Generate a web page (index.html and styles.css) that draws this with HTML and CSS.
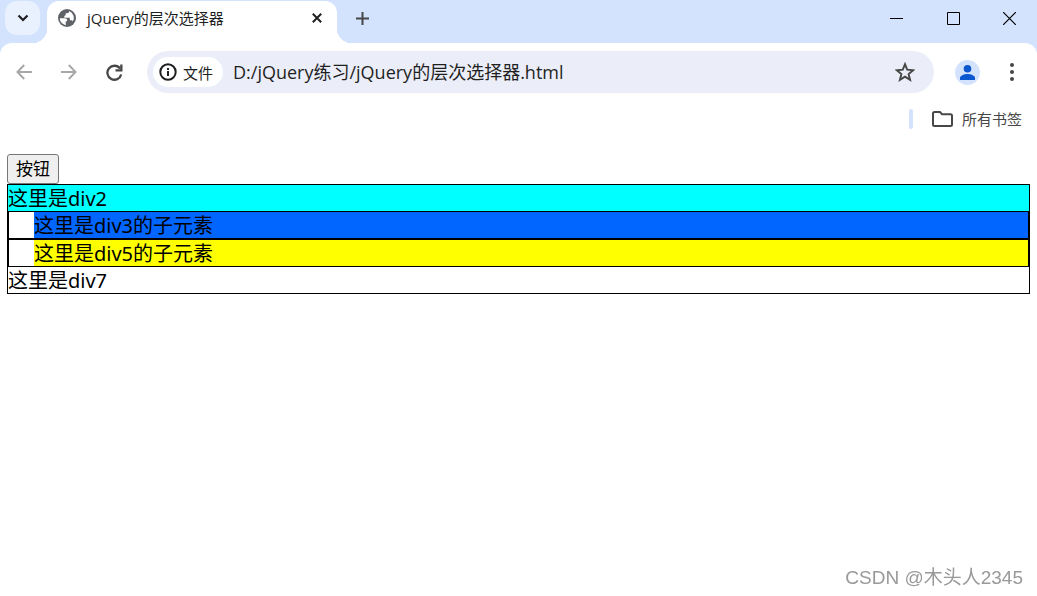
FILE: index.html
```
<!DOCTYPE html>
<html lang="zh-CN">
<head>
    <meta charset="UTF-8">
    <meta name="viewport" content="width=device-width, initial-scale=1.0">
    <title>jQuery的层次选择器</title>
    <link rel="stylesheet" href="styles.css">
</head>
<body>
    <header class="browser">
        <div class="tab-strip">
            <button class="tab-search" type="button" aria-label="搜索标签页">
                <svg width="12" height="8" viewBox="0 0 12 8"><path d="M1.500 1.500L6 6l4.500-4.500" fill="none" stroke="#1f1f1f" stroke-width="2.200"/></svg>
            </button>
            <div class="tab">
                <svg width="20" height="20" viewBox="0 0 24 24"><circle cx="12" cy="12" r="10.800" fill="#5f6368"/><path fill="#fff" d="M3.300 12.200h6c1.700 0 2.900 1 2.900 2.400 0 1-.7 1.600-1.800 1.600v2.200l.3 2.200a8.700 8.700 0 0 1-7.400-8.400zM14.500 3.700c.1 1.600-.7 2.600-2.300 2.600h-1.800v1.600c0 .9-.6 1.500-1.600 1.500v2.200h6.600v3.200h1.700c.9 0 1.600.5 1.800 1.500a8.700 8.700 0 0 0-4.400-12.600z"/></svg>
                <span class="tab-title">jQuery的层次选择器</span>
                <button class="icon-button" type="button" aria-label="关闭">
                    <svg width="10" height="10" viewBox="0 0 10 10"><path d="M.8.8l8.400 8.400M9.200.8L.8 9.200" stroke="#1f1f1f" stroke-width="2"/></svg>
                </button>
            </div>
            <button class="icon-button new-tab" type="button" aria-label="新标签页">
                <svg width="13" height="13" viewBox="0 0 13 13"><path d="M6.500 0v13M0 6.500h13" stroke="#474747" stroke-width="2"/></svg>
            </button>
            <div class="window-controls">
                <button type="button" aria-label="最小化">
                    <svg width="13" height="13" viewBox="0 0 13 13"><path d="M0 6.500h13" stroke="#000"/></svg>
                </button>
                <button type="button" aria-label="最大化">
                    <svg width="13" height="13" viewBox="0 0 13 13"><path d="M.5.5h12v12H.5z" fill="none" stroke="#000"/></svg>
                </button>
                <button type="button" aria-label="关闭窗口">
                    <svg width="13" height="13" viewBox="0 0 13 13"><path d="M0 0l13 13M13 0L0 13" stroke="#000" stroke-width="1.200"/></svg>
                </button>
            </div>
        </div>

        <div class="toolbar">
            <button class="icon-button" type="button" aria-label="后退">
                <svg width="16" height="16" viewBox="0 0 16 16"><path d="M8.200 1L1.500 8l6.700 7M1.500 8H16" fill="none" stroke="#a8a8a8" stroke-width="2"/></svg>
            </button>
            <button class="icon-button" type="button" aria-label="前进">
                <svg width="16" height="16" viewBox="0 0 16 16"><path d="M7.800 1l6.700 7-6.700 7M14.500 8H0" fill="none" stroke="#a8a8a8" stroke-width="2"/></svg>
            </button>
            <button class="icon-button" type="button" aria-label="重新加载">
                <svg width="17" height="17" viewBox="0 0 17 17"><path d="M14 4.500A7 7 0 1 0 15.200 10.500" fill="none" stroke="#474747" stroke-width="2.300"/><path d="M16.500.5v7h-7V5.200h4.700V.5z" fill="#474747"/></svg>
            </button>
            <div class="address-bar">
                <button class="file-chip" type="button">
                    <svg width="18" height="18" viewBox="0 0 18 18"><circle cx="9" cy="9" r="7.700" fill="none" stroke="#1f1f1f" stroke-width="2"/><path d="M8 8h2v5H8zM8 5h2v2H8z" fill="#1f1f1f"/></svg>
                    文件
                </button>
                <input class="address" type="text" aria-label="地址栏" value="D:/jQuery练习/jQuery的层次选择器.html">
                <button class="icon-button" type="button" aria-label="收藏">
                    <svg width="20" height="20" viewBox="0 0 20 20"><path d="M10 2.200l2.200 5.500 6 .5-4.600 3.900 1.500 5.800-5.100-3.200-5.100 3.200 1.500-5.800L1.800 8.200l6-.5z" fill="none" stroke="#474747" stroke-width="1.900"/></svg>
                </button>
            </div>
            <button class="profile" type="button" aria-label="个人资料">
                <svg width="15" height="15" viewBox="0 0 15 15"><circle cx="7.500" cy="3.800" r="3.800" fill="#0b57d0"/><path d="M0 15v-2c0-2.500 4.500-4 7.500-4s7.500 1.500 7.500 4v2z" fill="#0b57d0"/></svg>
            </button>
            <button class="icon-button" type="button" aria-label="菜单">
                <svg width="4" height="18" viewBox="0 0 4 18"><g fill="#474747"><circle cx="2" cy="2" r="2"/><circle cx="2" cy="9" r="2"/><circle cx="2" cy="16" r="2"/></g></svg>
            </button>
        </div>

        <div class="bookmarks">
            <span class="divider"></span>
            <button class="all-bookmarks" type="button">
                <svg width="21" height="16" viewBox="0 0 21 16"><path d="M1 2.500Q1 1 2.500 1H8l2 2.200h8.500Q20 3.200 20 4.700v8.800q0 1.500-1.500 1.500h-16Q1 15 1 13.500z" fill="none" stroke="#474747" stroke-width="2"/></svg>
                所有书签
            </button>
        </div>
    </header>

    <main class="page">
        <button id="btn" type="button">按钮</button>
        <div class="box">
            <div class="div2">这里是div2</div>
            <div class="box inner">
                <div class="div3">这里是div3的子元素</div>
            </div>
            <div class="box inner">
                <div class="div5">这里是div5的子元素</div>
            </div>
            <div>这里是div7</div>
        </div>
    </main>

    <div class="watermark">CSDN @木头人2345</div>
</body>
</html>
```

FILE: styles.css
```
* {
    box-sizing: border-box;
}

body {
    margin: 0;
    background-color: #fff;
    color: #000;
    font-family: "Open Sans", "Noto Sans CJK SC", sans-serif;
}

button, input {
    font-family: inherit;
    border: none;
    background: none;
    padding: 0;
    color: #1f1f1f;
}

svg {
    display: block;
    flex-shrink: 0;
}

.browser {
    background-color: #d3e3fd;
}

/* tab strip */
.tab-strip {
    display: flex;
    height: 43px;
    padding-left: 5px;
}

.tab-search {
    display: flex;
    align-items: center;
    justify-content: center;
    width: 35px;
    height: 34px;
    margin-top: 1px;
    border-radius: 12px;
    background-color: #e9f1fe;
}

.tab {
    position: relative;
    display: flex;
    align-items: center;
    width: 290px;
    margin: 1px 0 0 7px;
    padding: 0 15px 8px 10px;
    border-radius: 12px 12px 0 0;
    background-color: #fff;
}

/* curved feet of the active tab */
.tab::before, .tab::after {
    content: "";
    position: absolute;
    bottom: 0;
    width: 14px;
    height: 14px;
}

.tab::before {
    right: 100%;
    background: radial-gradient(circle at 0 0, transparent 14px, #fff 14px);
}

.tab::after {
    left: 100%;
    background: radial-gradient(circle at 100% 0, transparent 14px, #fff 14px);
}

.tab-title {
    flex: 1;
    margin-left: 10px;
    font-size: 15px;
    line-height: 20px;
    color: #1f1f1f;
    white-space: nowrap;
}

.icon-button {
    display: flex;
    align-items: center;
    justify-content: center;
}

.new-tab {
    height: 36px;
    margin-left: 19px;
}

.window-controls {
    display: flex;
    height: 37px;
    margin-left: auto;
}

.window-controls button {
    display: flex;
    align-items: center;
    justify-content: center;
    width: 57px;
}

.window-controls button:last-child {
    width: 55px;
}

/* toolbar */
.toolbar {
    display: flex;
    align-items: center;
    padding: 8px 23px 0 16px;
    border-radius: 12px 12px 0 0;
    background-color: #fff;
}

.toolbar > .icon-button {
    margin-right: 29px;
}

.toolbar > .icon-button:last-child {
    margin-right: 0;
}

.address-bar {
    flex: 1;
    display: flex;
    align-items: center;
    height: 42px;
    padding: 0 19px 0 6px;
    margin-left: -5px;
    border-radius: 21px;
    background-color: #ebeef8;
}

.file-chip {
    display: flex;
    align-items: center;
    gap: 6px;
    height: 30px;
    padding: 0 10px 0 6px;
    border-radius: 15px;
    background-color: #fff;
    font-size: 15px;
    white-space: nowrap;
}

.address {
    flex: 1;
    min-width: 0;
    margin-left: 10px;
    padding-bottom: 2px;
    font-size: 18px;
    outline: none;
}

.profile {
    display: flex;
    align-items: center;
    justify-content: center;
    width: 25px;
    height: 25px;
    margin: 0 30px 0 21px;
    border-radius: 50%;
    background-color: #d3e3fd;
}

/* bookmarks bar */
.bookmarks {
    display: flex;
    align-items: center;
    justify-content: flex-end;
    gap: 19px;
    height: 51px;
    padding-right: 15px;
    background-color: #fff;
}

.divider {
    width: 4px;
    height: 20px;
    border-radius: 2px;
    background-color: #d3e3fd;
}

.all-bookmarks {
    display: flex;
    align-items: center;
    gap: 9px;
    font-size: 15px;
    color: #474747;
}

/* page content */
.page {
    padding: 10px 7px;
    font-family: "Noto Sans", "Noto Sans CJK SC", sans-serif;
    font-size: 20px;
    line-height: 26px;
}

#btn {
    display: block;
    height: 30px;
    padding: 0 8px;
    border: 1px solid #767676;
    border-radius: 3px;
    background-color: #efefef;
    font-size: 17px;
    line-height: 26px;
    color: #000;
}

.box {
    border: 1px solid #000;
}

.box > div:not(.box) {
    height: 26px;
    line-height: 28px;
}

.inner {
    padding-left: 25px;
}

.div2 {
    background-color: #00ffff;
}

.div3 {
    background-color: #0066ff;
}

.div5 {
    background-color: #ffff00;
}

.watermark {
    position: fixed;
    right: 14px;
    bottom: 5px;
    font-family: "Liberation Sans", "Noto Sans CJK SC", sans-serif;
    font-size: 19px;
    line-height: 26px;
    color: #999;
}
```
